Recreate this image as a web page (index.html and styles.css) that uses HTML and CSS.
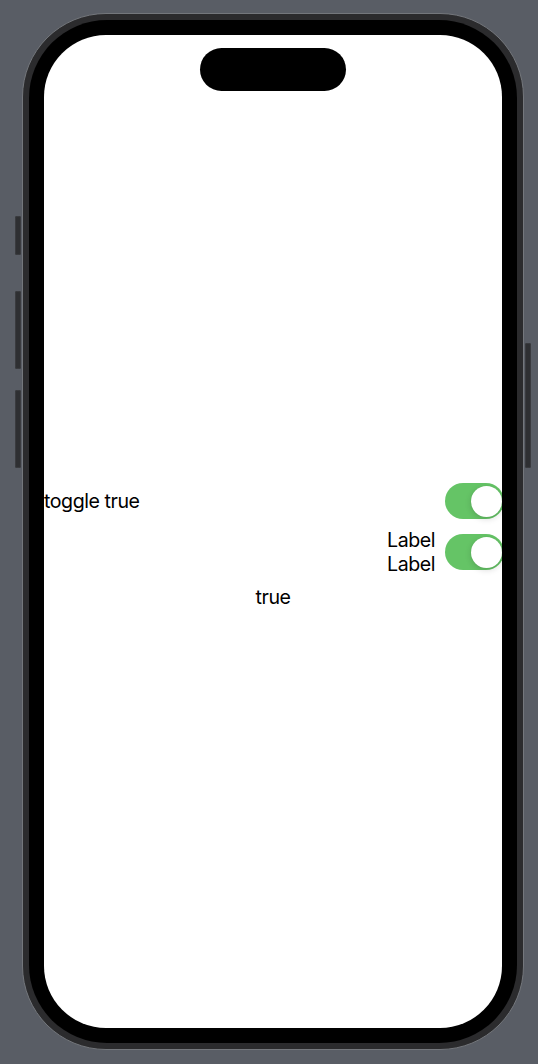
FILE: index.html
```html
<!DOCTYPE html>
<html>
<head>
<meta charset="utf-8">
<link rel="stylesheet" href="styles.css">
</head>
<body>
<div class="phone">
  <span class="btn btn-action"></span>
  <span class="btn btn-volup"></span>
  <span class="btn btn-voldown"></span>
  <span class="btn btn-power"></span>
  <div class="bezel">
    <div class="screen">
      <div class="island"></div>
      <div class="content">
        <div class="row row-one">
          <span class="label">toggle true</span>
          <span class="toggle"><span class="knob"></span></span>
        </div>
        <div class="row row-two">
          <span class="label label-multi">Label<br>Label</span>
          <span class="toggle"><span class="knob"></span></span>
        </div>
        <div class="value">true</div>
      </div>
    </div>
  </div>
</div>
</body>
</html>
```
FILE: styles.css
```css
html, body {
  margin: 0;
  padding: 0;
  background: #595d65;
}
body {
  width: 538px;
  height: 1064px;
  overflow: hidden;
  font-family: Inter, "Noto Sans", "Liberation Sans", sans-serif;
}
.phone {
  position: relative;
  margin: 13px 0 0 22px;
  width: 500px;
  height: 1035px;
  border: 1px solid #74777c;
  border-radius: 84px;
  padding: 0;
  background: #2b2b2d;
  box-sizing: content-box;
}
.bezel {
  margin: 6px;
  height: calc(100% - 12px);
  background: #000;
  border-radius: 78px;
  padding: 15px;
  box-sizing: border-box;
}
.screen {
  position: relative;
  width: 100%;
  height: 100%;
  background: #fff;
  border-radius: 62px;
  overflow: hidden;
}
.island {
  position: absolute;
  left: 156px;
  top: 13px;
  width: 146px;
  height: 43px;
  border-radius: 22px;
  background: #000;
}
.btn {
  position: absolute;
  width: 6px;
  background: #2e2f32;
  border-radius: 2px;
  box-shadow: inset 0 0 0 1px #3a3b3f;
}
.btn-action { left: -8px; top: 202px; height: 39px; }
.btn-volup { left: -8px; top: 277px; height: 78px; }
.btn-voldown { left: -8px; top: 376px; height: 78px; }
.btn-power { right: -8px; top: 329px; height: 125px; }

.content {
  padding-top: 448px;
  display: flex;
  flex-direction: column;
  gap: 9px;
  color: #000;
  font-size: 19.6px;
  line-height: 24px;
  letter-spacing: -0.45px;
}
.row {
  display: flex;
  align-items: center;
  justify-content: space-between;
}
.row-one { height: 36px; }
.row-two { justify-content: flex-end; gap: 10px; }
.label-multi { text-align: left; }
.toggle {
  position: relative;
  flex: none;
  width: 59px;
  height: 36px;
  border-radius: 18px;
  background: #65c466;
  margin-right: -2px;
}
.knob {
  position: absolute;
  right: 2.5px;
  top: 2.5px;
  width: 31px;
  height: 31px;
  border-radius: 50%;
  background: #fff;
  box-shadow: 0 2px 6px rgba(0,0,0,0.15), 0 0 1px rgba(0,0,0,0.1);
}
.value {
  text-align: center;
}
```
